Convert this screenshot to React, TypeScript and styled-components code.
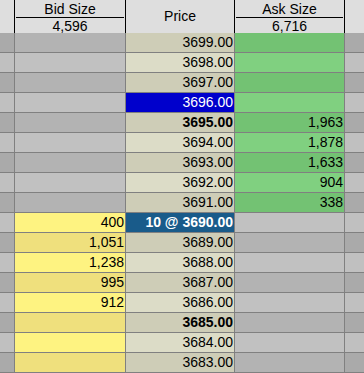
import styled, { createGlobalStyle } from "styled-components";

type Tone = "edge" | "gray" | "price" | "ask" | "bid" | "selected" | "trade";

const COLS = "14px 110px 108px 109px 19px";

const rows = [
  { price: 3699, ask: "" },
  { price: 3698, ask: "" },
  { price: 3697, ask: "" },
  { price: 3696, ask: "", selected: true },
  { price: 3695, ask: "1,963" },
  { price: 3694, ask: "1,878" },
  { price: 3693, ask: "1,633" },
  { price: 3692, ask: "904" },
  { price: 3691, ask: "338" },
  { price: 3690, bid: "400", trade: "10 @ 3690.00" },
  { price: 3689, bid: "1,051" },
  { price: 3688, bid: "1,238" },
  { price: 3687, bid: "995" },
  { price: 3686, bid: "912" },
  { price: 3685, bid: "" },
  { price: 3684, bid: "" },
  { price: 3683, bid: "" },
];

const palette: Record<Tone, [string, string]> = {
  edge: ["#aaaaaa", "#c0c0c0"],
  gray: ["#b3b3b3", "#c1c1c1"],
  price: ["#cecdb7", "#dcdcc7"],
  ask: ["#73c273", "#80d080"],
  bid: ["#efe07d", "#fef381"],
  selected: ["#0000cc", "#0000cc"],
  trade: ["#195b8a", "#195b8a"],
};

const DomLadder = () => {
  return (
    <Ladder>
      <HeaderRow>
        <HeadCell />
        <SizeHead>
          <SizeTitle>Bid Size</SizeTitle>
          <SizeTotal>4,596</SizeTotal>
        </SizeHead>
        <PriceHead>Price</PriceHead>
        <SizeHead>
          <SizeTitle>Ask Size</SizeTitle>
          <SizeTotal>6,716</SizeTotal>
        </SizeHead>
        <HeadCell />
      </HeaderRow>
      {rows.map((r, i) => {
        const dark = i % 2 === 0;
        const isAsk = r.ask !== undefined;
        const priceTone: Tone = r.trade ? "trade" : r.selected ? "selected" : "price";
        const bold = !!r.trade || r.price % 5 === 0;
        return (
          <LadderRow key={r.price}>
            <Cell $tone="edge" $dark={dark} />
            <Cell $tone={isAsk ? "gray" : "bid"} $dark={dark}>
              {r.bid}
            </Cell>
            <Cell $tone={priceTone} $dark={dark} $bold={bold}>
              {r.trade ?? `${r.price}.00`}
            </Cell>
            <Cell $tone={isAsk ? "ask" : "gray"} $dark={dark}>
              {r.ask}
            </Cell>
            <Cell $tone="edge" $dark={dark} />
          </LadderRow>
        );
      })}
    </Ladder>
  );
};

export default function App() {
  return (
    <>
      <GlobalStyle />
      <DomLadder />
    </>
  );
}

//*STYLES
const GlobalStyle = createGlobalStyle`
  body {
    margin: 0;
    font-family: "Liberation Sans", Arial, sans-serif;
    font-size: 14px;
    color: #000;
  }
`;

const Ladder = styled.div`
  width: 364px;
  display: flex;
  flex-direction: column;
`;

const HeaderRow = styled.div`
  display: grid;
  grid-template-columns: ${COLS};
  column-gap: 1px;
  height: 33px;
  background: #000;
`;

const HeadCell = styled.div`
  background: #dedede;
`;

const SizeHead = styled(HeadCell)`
  display: flex;
  flex-direction: column;
  align-items: stretch;
  text-align: center;
`;

const SizeTitle = styled.div`
  margin: 0 1px;
  padding-top: 1px;
  line-height: 16px;
  border-bottom: 1px solid #000;
`;

const SizeTotal = styled.div`
  padding-top: 1px;
  line-height: 14px;
`;

const PriceHead = styled(HeadCell)`
  text-align: center;
  line-height: 33px;
`;

const LadderRow = styled.div`
  display: grid;
  grid-template-columns: ${COLS};
  column-gap: 1px;
  height: 20px;
  box-sizing: border-box;
  border-bottom: 1px solid #808080;
  background: #808080;
`;

const Cell = styled.div<{ $tone: Tone; $dark: boolean; $bold?: boolean }>`
  background: ${(p) => palette[p.$tone][p.$dark ? 0 : 1]};
  color: ${(p) => (p.$tone === "selected" || p.$tone === "trade" ? "#fff" : "#000")};
  font-weight: ${(p) => (p.$bold ? "bold" : "normal")};
  text-align: right;
  padding-right: 1px;
  line-height: 19px;
  white-space: nowrap;
  overflow: hidden;
`;
